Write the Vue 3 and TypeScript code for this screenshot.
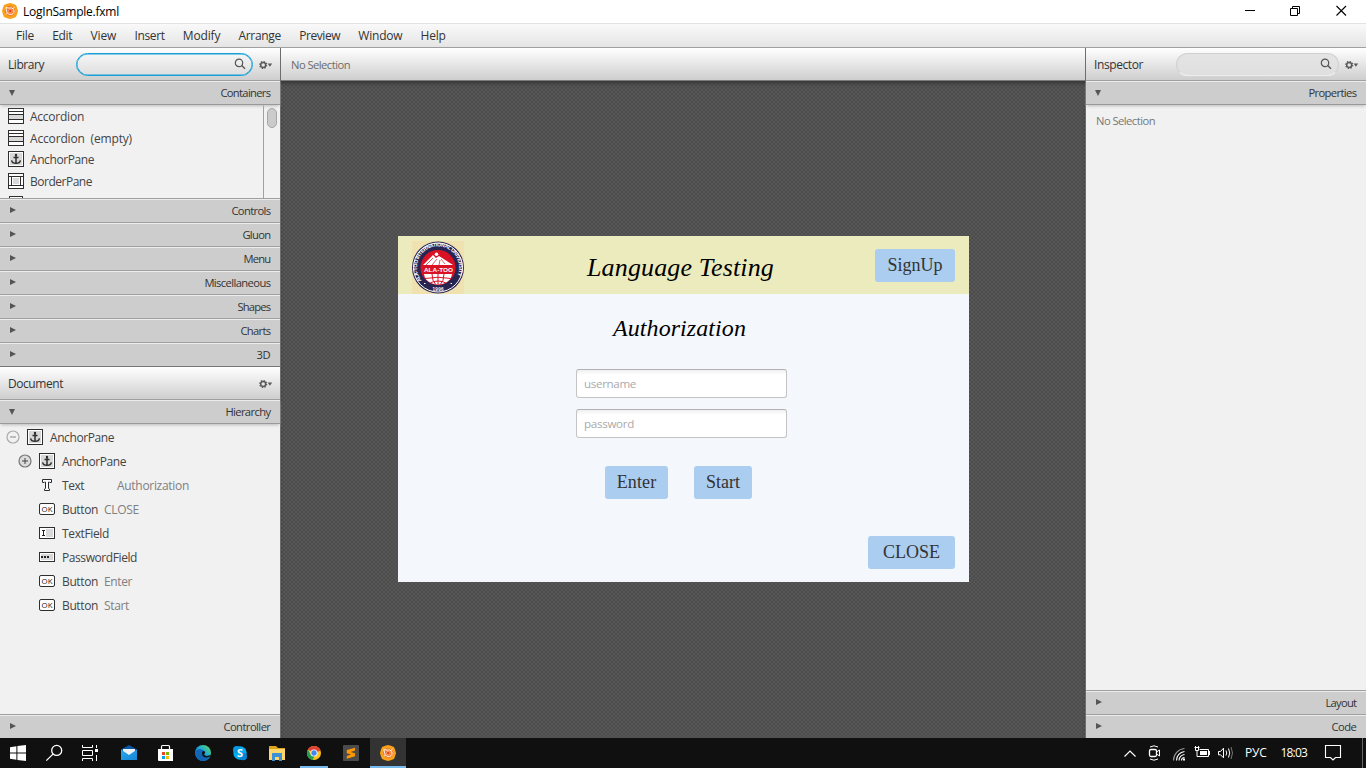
<script setup lang="ts">
import { h, type Directive, type FunctionalComponent } from 'vue'

// Tunes letter spacing so a label occupies the given width in pixels.
const vFit: Directive<HTMLElement, number> = {
  mounted(el, { value }) {
    const count = (el.textContent ?? '').length
    const natural = el.getBoundingClientRect().width
    el.style.letterSpacing = `${(value - natural) / count}px`
  },
}

interface Label { text: string; w: number }
interface TreeItem extends Label { icon: string; extra?: string; extraW?: number; level: number; gap?: number }

const menus: Label[] = [
  { text: 'File', w: 18 }, { text: 'Edit', w: 20 }, { text: 'View', w: 26 }, { text: 'Insert', w: 30 },
  { text: 'Modify', w: 37.5 }, { text: 'Arrange', w: 42.5 }, { text: 'Preview', w: 41 },
  { text: 'Window', w: 44 }, { text: 'Help', w: 25 },
]
const library: (Label & { icon: string })[] = [
  { text: 'Accordion', w: 54, icon: 'accordion' },
  { text: 'Accordion  (empty)', w: 102, icon: 'accordion' },
  { text: 'AnchorPane', w: 64, icon: 'anchor' },
  { text: 'BorderPane', w: 62, icon: 'border' },
]
const sections: Label[] = [
  { text: 'Controls', w: 39 }, { text: 'Gluon', w: 28 }, { text: 'Menu', w: 27 },
  { text: 'Miscellaneous', w: 66 }, { text: 'Shapes', w: 33 }, { text: 'Charts', w: 30 }, { text: '3D', w: 14 },
]
const tree: TreeItem[] = [
  { text: 'AnchorPane', w: 64, icon: 'anchor', level: 0 },
  { text: 'AnchorPane', w: 64, icon: 'anchor', level: 1 },
  { text: 'Text', w: 22, icon: 'text', level: 2, extra: 'Authorization', extraW: 72, gap: 33 },
  { text: 'Button', w: 36, icon: 'button', level: 2, extra: 'CLOSE', extraW: 35 },
  { text: 'TextField', w: 47, icon: 'field', level: 2 },
  { text: 'PasswordField', w: 75, icon: 'password', level: 2 },
  { text: 'Button', w: 36, icon: 'button', level: 2, extra: 'Enter', extraW: 28 },
  { text: 'Button', w: 36, icon: 'button', level: 2, extra: 'Start', extraW: 25 },
]

const box = { x: 0.5, y: 0.5, width: 15, height: 15, fill: '#fff', stroke: '#2e2e2e' }
const NodeIcon: FunctionalComponent<{ kind: string }> = ({ kind }) => {
  const parts = {
    accordion: () => [
      h('rect', box), h('rect', { x: 1, y: 7, width: 14, height: 4, fill: '#d8d8d8' }),
      h('path', { d: 'M1 3.5H15M1 6.5H15M1 11.5H15', stroke: '#2e2e2e' }),
    ],
    anchor: () => [
      h('rect', box), h('rect', { x: 2, y: 2, width: 12, height: 12, fill: '#d8d8d8' }),
      h('path', { d: 'M8 3V12M5.5 6.5H10.5', stroke: '#2e2e2e', 'stroke-width': 1.5 }),
      h('path', { d: 'M3.6 9.4C4 12.2 6 12.3 8 12.3S12 12.2 12.4 9.4', fill: 'none', stroke: '#2e2e2e', 'stroke-width': 1.4 }),
      h('circle', { cx: 8, cy: 4, r: 1.2, fill: '#2e2e2e' }),
    ],
    border: () => [
      h('rect', box), h('path', { d: 'M1 3.5H15M1 12.5H15M3.5 3.5V12.5M12.5 3.5V12.5', stroke: '#2e2e2e' }),
      h('rect', { x: 5, y: 5, width: 6, height: 6, fill: '#d8d8d8' }),
    ],
    text: () => [
      h('path', { d: 'M3.5 2.5H12.5V5.5H11L10.5 5H9.5V11.5L10.5 12V13.5H5.5V12L6.5 11.5V5H5.5L5 5.5H3.5Z', fill: '#fff', stroke: '#2e2e2e' }),
    ],
    button: () => [
      h('rect', { x: 0.5, y: 2.5, width: 15, height: 11, rx: 1.5, fill: '#fff', stroke: '#2e2e2e' }),
      h('text', { x: 8, y: 10.8, 'text-anchor': 'middle', 'font-size': 7.8, 'font-family': 'Open Sans, sans-serif', fill: '#222' }, 'OK'),
    ],
    field: () => [
      h('rect', { ...box, y: 2.5, height: 11 }), h('rect', { x: 7, y: 4, width: 7, height: 8, fill: '#d8d8d8' }),
      h('path', { d: 'M3 5.5H6M3 10.5H6M4.5 5V11', stroke: '#222' }),
    ],
    password: () => [
      h('rect', { ...box, y: 3.5, height: 9 }), h('rect', { x: 2, y: 5, width: 12, height: 6, fill: '#d8d8d8' }),
      h('path', { d: 'M2 8H4M5 8H7M8 8H10', stroke: '#222', 'stroke-width': 2 }),
    ],
  } as Record<string, () => ReturnType<typeof h>[]>
  return h('svg', { width: 16, height: 16, viewBox: '0 0 16 16' }, parts[kind]())
}

const Gear: FunctionalComponent = () => h('svg', { width: 14, height: 10, viewBox: '0 0 14 10' }, [
  h('circle', { cx: 4.2, cy: 5, r: 2.5, fill: 'none', stroke: '#5a5a5a', 'stroke-width': 1.5 }),
  h('circle', { cx: 4.2, cy: 5, r: 3.5, fill: 'none', stroke: '#5a5a5a', 'stroke-width': 1.2, 'stroke-dasharray': '1.375 1.375' }),
  h('path', { d: 'M8.6 3.6H13.2L10.9 6.8Z', fill: '#5a5a5a' }),
])

const Lens: FunctionalComponent = () => h('svg', { width: 12, height: 12, viewBox: '0 0 12 12' }, [
  h('circle', { cx: 5, cy: 4.9, r: 3.7, fill: 'none', stroke: '#555', 'stroke-width': 1.2 }),
  h('path', { d: 'M7.7 7.6L11 10.8', stroke: '#555', 'stroke-width': 1.4 }),
])

const SceneLogo: FunctionalComponent = () => h('svg', { width: 16, height: 16, viewBox: '0 0 16 16' }, [
  h('path', { d: 'M8 0L10.8 .8L14 2.1L15.2 5L16 8L15.2 11L14 13.9L10.8 15.2L8 16L5.2 15.2L2 13.9L.8 11L0 8L.8 5L2 2.1L5.2 .8Z', fill: '#f9a11b' }),
  h('circle', { cx: 8, cy: 8, r: 5, fill: '#f07a2a' }),
  h('path', { d: 'M3.8 4.6L7.2 5.1Q10 4 11.6 6.4Q13 10 9.8 11.4Q6 12.2 5 9.4Q4.4 7 3.8 4.6M10.5 5.7L12.5 4.3M5.4 9.8L4.2 11.4', fill: 'none', stroke: '#fff', 'stroke-width': 0.9 }),
  h('circle', { cx: 8.3, cy: 8, r: 1.7, fill: '#e63b1f', stroke: '#ffc9a5', 'stroke-width': 0.6 }),
])
</script>

<template>
  <div class="screen">
    <header class="titlebar">
      <SceneLogo />
      <span v-fit="96" class="t">LogInSample.fxml</span>
      <svg class="winctl" width="104" height="12" viewBox="0 0 104 12" fill="none" stroke="#000">
        <path d="M0 5.5H10M45.5 3.5H52.5V10.5H45.5ZM47.5 3V1.5H54.5V8.5H53" />
        <path d="M91.5 1L101 10.5M101 1L91.5 10.5" stroke-width="1.1" />
      </svg>
    </header>
    <nav class="menubar">
      <span v-for="m in menus" :key="m.text" v-fit="m.w" class="t">{{ m.text }}</span>
    </nav>

    <main class="work">
      <aside class="left">
        <div class="head">
          <span v-fit="36" class="t">Library</span>
          <div class="search active"><Lens /></div>
          <Gear />
        </div>
        <div class="bar open"><i class="down" /><span v-fit="50" class="t">Containers</span></div>
        <div class="liblist">
          <div class="items">
            <div v-for="item in library" :key="item.text" class="libitem">
              <NodeIcon :kind="item.icon" /><span v-fit="item.w" class="t">{{ item.text }}</span>
            </div>
            <div class="peek" />
          </div>
          <div class="scroll"><div class="thumb" /></div>
        </div>
        <div v-for="s in sections" :key="s.text" class="bar">
          <i class="right" /><span v-fit="s.w" class="t">{{ s.text }}</span>
        </div>
        <div class="head doc">
          <span v-fit="55" class="t">Document</span>
          <Gear />
        </div>
        <div class="bar open"><i class="down" /><span v-fit="45" class="t">Hierarchy</span></div>
        <div class="tree">
          <div v-for="(n, i) in tree" :key="i" class="node" :class="'level' + n.level">
            <svg v-if="n.level < 2" class="toggle" width="14" height="14" viewBox="0 0 14 14">
              <circle cx="7" cy="7" r="6" :fill="n.level ? '#dcdcdc' : '#f1f1f1'" :stroke="n.level ? '#777' : '#aaa'" stroke-width="1.2" />
              <path :d="n.level ? 'M4 7H10M7 4V10' : 'M4 7H10'" :stroke="n.level ? '#444' : '#888'" />
            </svg>
            <NodeIcon :kind="n.icon" />
            <span v-fit="n.w" class="t">{{ n.text }}</span>
            <span v-if="n.extra" v-fit="n.extraW ?? 30" class="t extra" :class="{ far: n.gap }">{{ n.extra }}</span>
          </div>
        </div>
        <div class="bar last"><i class="right" /><span v-fit="47" class="t">Controller</span></div>
      </aside>

      <section class="center">
        <div class="head crumb"><span v-fit="59" class="t">No Selection</span></div>
        <div class="stage">
          <div class="pane">
            <div class="banner">
              <svg class="logo" width="52" height="53" viewBox="0 0 52 53">
                <defs>
                  <path id="ring" d="M9.6 39.5A21 21 0 1 1 42.4 39.5" />
                  <clipPath id="disc"><circle cx="26" cy="26.5" r="17" /></clipPath>
                </defs>
                <rect width="52" height="53" fill="#f0e1b1" />
                <circle cx="26" cy="26.5" r="26" fill="#292552" />
                <circle cx="26" cy="26.5" r="24.5" fill="none" stroke="#fff" stroke-width="1" />
                <text fill="#fff" font-family="Liberation Sans, sans-serif" font-weight="bold" font-size="5.2">
                  <textPath href="#ring" textLength="88">ALA-TOO INTERNATIONAL UNIVERSITY</textPath>
                </text>
                <circle cx="26" cy="26.5" r="17.5" fill="#d91125" />
                <g clip-path="url(#disc)">
                  <path d="M11 24L21 14L24 17L27 15L41 24Z" fill="#fff" />
                  <path d="M14 24L21 17M20 24L25 18M27 24L28 19M33 23L29 18" stroke="#d91125" stroke-width=".7" />
                  <circle cx="24.5" cy="13.2" r="1.8" fill="#fff" />
                  <path d="M12 33H40Q38 44 26 44Q14 44 12 33Z" fill="#fff" />
                  <path d="M26 33V44M20 33Q20 40 24 44M32 33Q32 40 28 44M13 37.5Q26 35 39 37.5M18 42Q26 38 34 42" fill="none" stroke="#d91125" stroke-width="1" />
                </g>
                <text x="26.5" y="30.8" text-anchor="middle" textLength="29" lengthAdjust="spacingAndGlyphs" fill="#fff" font-family="Liberation Sans, sans-serif" font-weight="bold" font-size="6">ALA-TOO</text>
                <text x="26" y="50" text-anchor="middle" textLength="11" fill="#fff" font-family="Liberation Sans, sans-serif" font-weight="bold" font-size="4.6">1996</text>
                <path d="M12 42.5h1.5M38.5 42.5H40" stroke="#fff" />
              </svg>
              <h1><span v-fit="187">Language Testing</span></h1>
              <button class="signup"><span v-fit="55">SignUp</span></button>
            </div>
            <h2><span v-fit="133">Authorization</span></h2>
            <div class="input"><span v-fit="52">username</span></div>
            <div class="input"><span v-fit="50">password</span></div>
            <div class="actions">
              <button class="enter"><span v-fit="39.5">Enter</span></button>
              <button class="start"><span v-fit="34">Start</span></button>
            </div>
            <button class="close"><span v-fit="57">CLOSE</span></button>
          </div>
        </div>
      </section>

      <aside class="rightside">
        <div class="head">
          <span v-fit="49" class="t">Inspector</span>
          <div class="search"><Lens /></div>
          <Gear />
        </div>
        <div class="bar open"><i class="down" /><span v-fit="48" class="t">Properties</span></div>
        <div class="props"><span v-fit="59" class="t">No Selection</span></div>
        <div class="bar"><i class="right" /><span v-fit="31" class="t">Layout</span></div>
        <div class="bar last"><i class="right" /><span v-fit="25" class="t">Code</span></div>
      </aside>
    </main>

    <footer class="taskbar">
      <svg class="apps" width="410" height="30" viewBox="0 0 410 30">
        <defs>
          <linearGradient id="edge" x1="0" y1="1" x2="1" y2="0"><stop stop-color="#0c68bd" /><stop offset=".55" stop-color="#1ba9d9" /><stop offset="1" stop-color="#6be04e" /></linearGradient>
          <linearGradient id="mail" x1="0" y1="0" x2="1" y2="1"><stop stop-color="#2aa8ec" /><stop offset="1" stop-color="#1686d6" /></linearGradient>
        </defs>
        <path d="M10 9.3L16.4 8.3V14.5H10ZM17.4 8.1L26 7V14.5H17.4ZM10 15.5H16.4V21.8L10 20.8ZM17.4 15.5H26V23L17.4 22Z" fill="#fff" />
        <g fill="none" stroke="#fff" stroke-width="1.3"><circle cx="56.7" cy="12.4" r="5" /><path d="M53 16.1L46.3 22.6" /></g>
        <path d="M82.5 7V9.5H92.5V7M82.5 23V20.5H92.5V23M82.5 12.5H92.5V17.5H82.5ZM96.5 7V10M96.5 17V23" fill="none" stroke="#fff" />
        <path d="M95 11H98V14H95Z" fill="#fff" />
        <path d="M121 11.5L129 7L137 11.5V22H121Z" fill="#0a56a4" /><path d="M123 11H135V18H123Z" fill="#eef3f8" /><path d="M121 11.5L129 17L137 11.5V22H121Z" fill="url(#mail)" />
        <path d="M161.5 12V8.5Q161.5 7.5 162.5 7.5H168.5Q169.5 7.5 169.5 8.5V12" fill="none" stroke="#fff" stroke-width="1.2" /><path d="M158 11H173V23H159Q158 23 158 22Z" fill="#fff" />
        <path fill="#ef4423" d="M162 14H165V17H162Z" /><path fill="#7bb900" d="M166 14H169V17H166Z" /><path fill="#00a3ec" d="M162 18H165V21H162Z" /><path fill="#ffb800" d="M166 18H169V21H166Z" />
        <circle cx="203" cy="15" r="8" fill="url(#edge)" /><path d="M195.2 13.5Q197.5 10.5 201.5 11.5Q205 12.5 204 15Q202 16 203.5 18Q206 20 210 18.2Q206.5 23.5 201.5 22.8Q195.5 21.5 195.2 13.5Z" fill="#1165b4" /><path d="M202 14.5Q203.2 12.4 205 13.4Q205.6 15 204 16.3Q205.5 19.2 211 16.8L210 18.5Q204.8 20.8 202.3 17.4Z" fill="#111" />
        <circle cx="240" cy="15" r="6.7" fill="#00aff0" /><circle cx="236.8" cy="11.7" r="3.8" fill="#0898e2" /><circle cx="243.2" cy="18.5" r="3.8" fill="#0784d8" />
        <text x="240" y="19.2" text-anchor="middle" fill="#fff" font-family="Open Sans, sans-serif" font-weight="bold" font-size="11">S</text>
        <path d="M269 8H276L278 10H285V14H269Z" fill="#dfa21b" /><path d="M269 11H285V22H269Z" fill="#ffd66b" /><path d="M272 15H282V23H279V19H275V23H272Z" fill="#3b91d5" />
        <circle cx="314" cy="15" r="7" fill="#fcc31e" /><path d="M314 15L307.9 11.5A7 7 0 0 1 320.6 12.5Z" fill="#de4335" /><path d="M307.9 11.5L311 17L314.5 18.5L312.5 22A7 7 0 0 1 307.9 11.5Z" fill="#279c52" /><circle cx="314" cy="15" r="3.5" fill="#fff" /><circle cx="314" cy="15" r="2.7" fill="#4285f4" />
        <rect x="300" y="28" width="28" height="2" fill="#76b9ed" />
        <rect x="343" y="7" width="16" height="16" rx="1" fill="#4b4b4b" /><path d="M346.8 12.1L355 9.7V12.6L350.7 14L355 15.3V18.3L346.8 20.8V17.9L351 16.5L346.8 15.2Z" fill="#ff9800" />
        <rect x="370" width="36" height="30" fill="#333" /><rect x="370" y="28" width="36" height="2" fill="#76b9ed" />
        <g transform="translate(380 7)"><SceneLogo /></g>
      </svg>
      <svg class="tray" width="114" height="30" viewBox="0 0 114 30" fill="none" stroke="#fff">
        <path d="M4.5 18.5L10 13L15.5 18.5" stroke-width="1.2" />
        <rect x="29.5" y="11.5" width="7" height="7" rx="1.5" stroke-width="1.3" /><path d="M36.5 14L39.5 12V18L36.5 16M30 9Q34 6.6 38 9M30 21Q34 23.4 38 21" />
        <g stroke-width="1.1"><path d="M53.5 22.5A12 12 0 0 1 64.5 10.5" stroke="#999" /><path d="M56.5 22.5A9 9 0 0 1 64.5 13.5M59 22.5A6 6 0 0 1 64.5 16.5M61.5 22.5A3 3 0 0 1 64.5 19.5" /></g><rect x="63" y="20.5" width="2" height="2" fill="#fff" stroke="none" />
        <path d="M79.5 11.5H88.5V18.5H79.5" stroke-width="1" /><path d="M80 13H87V17H80Z" fill="#fff" stroke="none" /><path d="M89.5 13V17M74.5 9.5H79.5M75.5 8V10M78.5 8V10M75.5 10V12.5H78.5V10M77 13V18.5H80" />
        <path d="M98.5 13.5H100.5L103.5 10.2V19.8L100.5 16.8H98.5ZM106 12.5Q107.5 15 106 17.5M108.5 10.5Q111 15 108.5 19.5" /><path d="M111 9Q114 15 111 21" stroke="#777" />
      </svg>
      <span v-fit="21.5" class="lang">РУС</span>
      <span v-fit="26.5" class="time">18:03</span>
      <svg class="note" width="18" height="18" viewBox="0 0 18 18"><path d="M1.5 1.5H16.5V13.5H11.5L9 16L6.5 13.5H1.5Z" fill="none" stroke="#fff" stroke-width="1.1" /></svg>
      <div class="desk" />
    </footer>
  </div>
</template>

<style>
html, body { margin: 0; overflow: hidden; }
</style>

<style scoped>
.screen { width: 1366px; height: 768px; display: flex; flex-direction: column; overflow: hidden; background: #fff; font: 12px/16px "Open Sans", "Noto Sans", sans-serif; color: #333; }
.screen * { box-sizing: border-box; }
.screen :deep(svg) { flex: none; display: block; }
span { display: inline-block; white-space: pre; flex: none; }
.titlebar { height: 23px; flex: none; display: flex; align-items: center; padding-left: 2px; gap: 5px; color: #000; background: #fff; }
.titlebar :deep(svg:first-child) { margin-top: -1px; }
.titlebar .t { margin-top: 1px; }
.winctl { margin-left: auto; margin-right: 17px; margin-top: -2px; }
.menubar { height: 25px; flex: none; display: flex; align-items: center; gap: 18.2px; padding-left: 16px; border-top: 1px solid #e2e2e2; border-bottom: 1px solid #a0a0a0; background: linear-gradient(#f9f9f9, #e5e5e5); }
.work { height: 690px; display: flex; flex: none; }
.left { width: 281px; border-right: 1px solid #6d6d6d; display: flex; flex-direction: column; background: #f1f1f1; }
.center { flex: 1; display: flex; flex-direction: column; }
.rightside { width: 281px; border-left: 1px solid #6d6d6d; display: flex; flex-direction: column; background: #f1f1f1; }
.head { height: 32px; flex: none; display: flex; align-items: center; padding: 1px 7px 0 8px; background: linear-gradient(#fff, #cecece); }
.search { height: 23px; width: 177px; margin-left: auto; margin-right: 6px; margin-top: -1px; border-radius: 12px; display: flex; align-items: center; justify-content: flex-end; padding-right: 6px; border: 1px solid #d0d0d0; border-bottom-color: #eee; background: linear-gradient(#e4e4e4, #dfdfdf); }
.rightside .search { width: 163px; margin-right: 6px; }
.search.active { border: 1px solid #16a0d7; box-shadow: inset 0 0 0 .5px #16a0d7; background: linear-gradient(#f6f6f6, #dedede); }
.doc { height: 33px; border-top: 1px solid #777; justify-content: space-between; }
.doc .t { margin-top: 1px; }
.bar { height: 24px; flex: none; border-top: 1px solid #a0a0a0; box-shadow: inset 0 1px #ececec; background: #cdcdcd; display: flex; align-items: center; justify-content: space-between; padding: 1px 9.6px 0 9px; font-size: 11.2px; }
.bar.open { height: 25px; border-bottom: 1px solid #999; box-shadow: inset 0 1px #ececec, 0 2px 3px -1px #bbb; z-index: 1; }
.down { border: 3.5px solid transparent; border-top: 6px solid #555; border-bottom: 0; margin-top: -1px; }
.right { border: 3px solid transparent; border-left: 6px solid #555; border-right: 0; margin: -3px 0 0 1px; }
.liblist { height: 93px; flex: none; display: flex; overflow: hidden; }
.items { width: 264px; border-right: 1px solid #a0a0a0; padding: 0 0 0 8px; }
.libitem { height: 21.7px; display: flex; align-items: center; gap: 6px; color: #444; }
.libitem .t { margin-top: 2px; }
.peek { width: 14px; height: 8px; margin: 4px 0 0 1px; border: 1px solid #2e2e2e; background: #fff; }
.scroll { flex: 1; padding: 3px 3px; }
.thumb { width: 10px; height: 20px; border-radius: 5px; border: 1px solid #a6a6a6; background: #cbcbcb; }
.tree { flex: 1; padding-top: 1px; overflow: hidden; border-top: 0; }
.node { height: 24px; display: flex; align-items: center; color: #444; }
.node.level0 { padding-left: 6px; }
.node.level1 { padding-left: 18px; }
.node.level2 { padding-left: 39px; }
.toggle { margin-right: 7px; margin-top: -1px; }
.node .t { margin-left: 7px; margin-top: 2px; }
.node .extra { margin-left: 6px; color: #808080; }
.node .extra.far { margin-left: 33px; }
.crumb { height: 33px; padding-left: 10px; border-bottom: 1px solid #7c7c7c; font-size: 11.2px; color: #6c6c6c; }
.stage { flex: 1; padding: 155px 0 0 117px; box-shadow: inset 0 4px 4px -2px #333; background-color: #4c4c4c; background-image: radial-gradient(circle at 1px 1px, #575757 0.7px, transparent 1px), radial-gradient(circle at 3px 3px, #575757 0.7px, transparent 1px); background-size: 4px 4px; }
.pane { width: 571px; height: 346px; background: #f4f7fc; display: flex; flex-direction: column; font-family: "Liberation Serif", "Times New Roman", serif; }
.banner { height: 58px; background: #ecebbe; display: flex; }
.logo { margin: 5px 0 0 14px; }
h1, h2 { margin: 0; font-style: italic; font-weight: normal; color: #000; }
h1 { font-size: 26px; line-height: 30px; margin: 17px 0 0 123px; width: 187px; }
h2 { font-size: 24px; line-height: 28px; margin: 20px 0 27px 215px; width: 140px; }
button { height: 33px; border: 0; border-radius: 3px; padding: 0; background: #abcdef; color: #333; font: 18px/33px "Liberation Serif", "Times New Roman", serif; display: flex; justify-content: center; }
.signup { width: 80px; margin: 13px 14px 0 auto; }
.input { width: 211px; height: 29px; margin: 0 0 11px 178px; padding: 6px 7px; border: 1px solid #c4c4c4; border-top-color: #b2b2b2; border-radius: 3px; background: linear-gradient(#f0f0f0, #fff 5px); font: 11.6px/16px "Open Sans", sans-serif; color: #aaa; }
.actions { display: flex; gap: 26px; margin: 17px 0 0 207px; }
.enter { width: 63px; }
.start { width: 58px; }
.close { width: 87px; margin: 37px 14px 0 auto; }
.props { flex: 1; padding: 8px 10px; font-size: 11.2px; color: #777; }
.taskbar { height: 30px; flex: none; display: flex; align-items: center; background: #101010; color: #fff; }
.tray { margin-left: auto; margin-right: 11px; }
.time { margin: 0 17px 0 14px; }
.note { margin-right: 20px; }
.desk { width: 4px; height: 30px; border-left: 1px solid #666; }
</style>
